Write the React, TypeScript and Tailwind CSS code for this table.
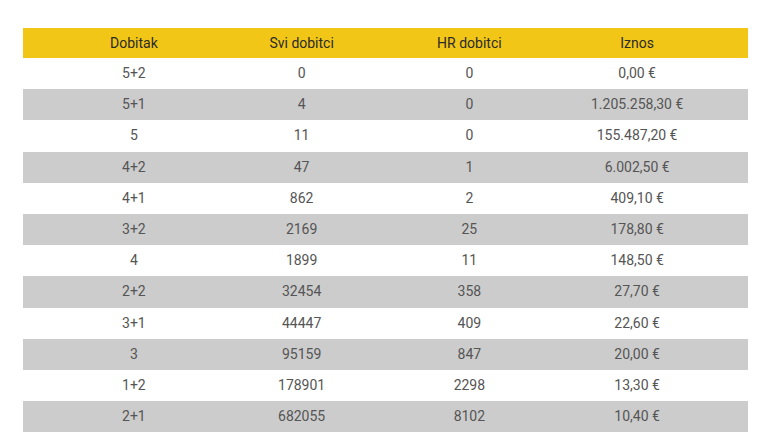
const rows = [
  ["5+2", "0", "0", "0,00 €"],
  ["5+1", "4", "0", "1.205.258,30 €"],
  ["5", "11", "0", "155.487,20 €"],
  ["4+2", "47", "1", "6.002,50 €"],
  ["4+1", "862", "2", "409,10 €"],
  ["3+2", "2169", "25", "178,80 €"],
  ["4", "1899", "11", "148,50 €"],
  ["2+2", "32454", "358", "27,70 €"],
  ["3+1", "44447", "409", "22,60 €"],
  ["3", "95159", "847", "20,00 €"],
  ["1+2", "178901", "2298", "13,30 €"],
  ["2+1", "682055", "8102", "10,40 €"],
];

const headers = ["Dobitak", "Svi dobitci", "HR dobitci", "Iznos"];

export default function App() {
  return (
    <div className="bg-white w-[760px] h-[445px] pt-[28px] pl-[23px] font-['Roboto',sans-serif] text-[14px]">
      <div className="w-[725px]">
        {/* header */}
        <div className="grid grid-cols-4 px-[27px] h-[30px] items-center bg-[#f2c617] text-[#2b2b2b]">
          {headers.map((h) => (
            <div key={h} className="text-center">{h}</div>
          ))}
        </div>

        {rows.map((r, i) => (
          <div
            key={i}
            className={
              "grid grid-cols-4 px-[27px] h-[31.2px] items-center text-[#555555] " +
              (i % 2 === 1 ? "bg-[#cccccc]" : "bg-white")
            }
          >
            {r.map((c, j) => (
              <div key={j} className="text-center">{c}</div>
            ))}
          </div>
        ))}
      </div>
    </div>
  );
}
